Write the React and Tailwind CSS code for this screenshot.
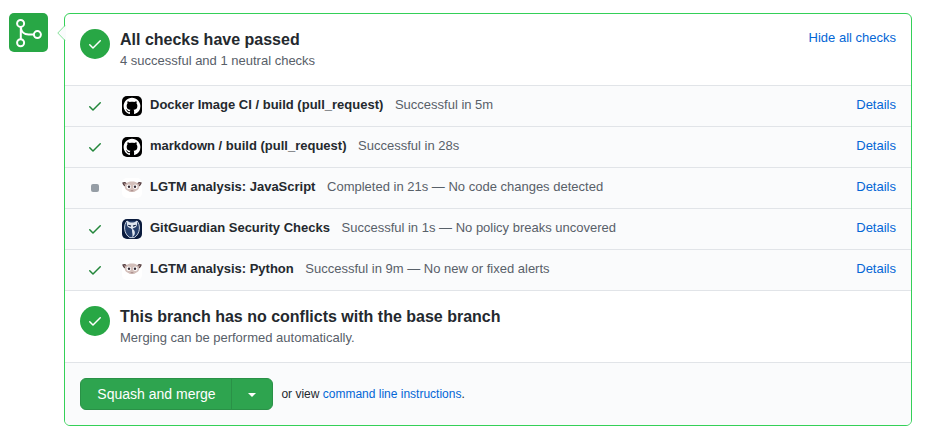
import React from 'react';

function Check({ className }) {
  return (
    <svg className={className} width="16" height="16" viewBox="0 0 16 16" fill="currentColor">
      <path d="M13.78 4.22a.75.75 0 010 1.06l-7.25 7.25a.75.75 0 01-1.06 0L2.22 9.28a.75.75 0 011.06-1.06L6 10.94l6.72-6.72a.75.75 0 011.06 0z" />
    </svg>
  );
}

function MergeIcon() {
  return (
    <svg width="39" height="39" viewBox="0 0 39 39" fill="none" stroke="#fff" strokeWidth="2">
      <circle cx="11.6" cy="10.4" r="3.5" />
      <circle cx="11.6" cy="29.8" r="3.5" />
      <circle cx="28.4" cy="21.6" r="3.5" />
      <path d="M11.8 13.9V26.3M11.8 13.9C12 18.5 15.2 21.6 19.5 21.6H24.9" />
    </svg>
  );
}

function GitHubAvatar() {
  return (
    <svg width="20" height="20" viewBox="0 0 20 20">
      <rect width="20" height="20" rx="5" fill="#000" />
      <g transform="translate(1.6 1.7) scale(1.05)">
        <path
          fill="#fff"
          d="M8 0C3.58 0 0 3.58 0 8c0 3.54 2.29 6.53 5.47 7.59.4.07.55-.17.55-.38 0-.19-.01-.82-.01-1.49-2.01.37-2.53-.49-2.69-.94-.09-.23-.48-.94-.82-1.13-.28-.15-.68-.52-.01-.53.63-.01 1.08.58 1.23.82.72 1.21 1.87.87 2.33.66.07-.52.28-.87.51-1.07-1.78-.2-3.64-.89-3.64-3.95 0-.87.31-1.59.82-2.15-.08-.2-.36-1.02.08-2.12 0 0 .67-.21 2.2.82.64-.18 1.32-.27 2-.27s1.36.09 2 .27c1.53-1.04 2.2-.82 2.2-.82.44 1.1.16 1.92.08 2.12.51.56.82 1.27.82 2.15 0 3.07-1.87 3.75-3.65 3.95.29.25.54.73.54 1.48 0 1.07-.01 1.93-.01 2.2 0 .21.15.46.55.38A8.01 8.01 0 0016 8c0-4.42-3.58-8-8-8z"
        />
      </g>
    </svg>
  );
}

function LgtmAvatar() {
  return (
    <svg width="20" height="20" viewBox="0 0 20 20">
      <rect width="20" height="20" rx="5" fill="#fff" />
      <path d="M.2 4.6C2 3.4 4.2 4 5 5.6L3.2 8.6C1.6 8 .5 6.4 .2 4.6ZM19.8 4.6C18 3.4 15.8 4 15 5.6L16.8 8.6C18.4 8 19.5 6.4 19.8 4.6Z" fill="#5b4547" />
      <path d="M1.7 5.2L4 5.7L3.3 7.4ZM18.3 5.2L16 5.7L16.7 7.4Z" fill="#c9aaa8" />
      <path d="M10 3.5C14 3.5 17.2 5.5 17.2 8.9C17.2 11.4 14.7 12.2 13.2 13.2C11.8 14.4 8.2 14.4 6.8 13.2C5.3 12.2 2.8 11.4 2.8 8.9C2.8 5.5 6 3.5 10 3.5Z" fill="#d3bfba" />
      <circle cx="6.7" cy="8.7" r="2.3" fill="#fff" />
      <circle cx="13.3" cy="8.7" r="2.3" fill="#fff" />
      <circle cx="7" cy="8.7" r="1.2" fill="#332730" />
      <circle cx="13" cy="8.7" r="1.2" fill="#332730" />
      <path d="M8.3 12.2H11.7L10.7 13.2H9.3Z" fill="#a48684" />
    </svg>
  );
}

function GuardianAvatar() {
  return (
    <svg width="20" height="20" viewBox="0 0 20 20">
      <rect width="20" height="20" rx="5" fill="#0a1b3d" />
      <path d="M5 1.8C1.2 6 1.7 15 7.8 18.6H12.2C18.3 15 18.8 6 15 1.8" fill="#263f6b" stroke="#dfe6f0" strokeWidth=".9" />
      <path d="M5 1.8C6.8 3.2 8.5 3.6 10 3.6C11.5 3.6 13.2 3.2 15 1.8C15.5 4.8 15.2 8.8 11.2 9.2L10 10.4L8.8 9.2C4.8 8.8 4.5 4.8 5 1.8Z" fill="#dfe6f0" />
      <path d="M6.2 6.2L9 7.1M13.8 6.2L11 7.1" stroke="#0a1b3d" strokeWidth="1.2" />
      <path d="M10.2 9.8C14 11.5 13.6 16.5 10.2 18.2C11.2 15 9.5 13.5 10.2 9.8Z" fill="#dfe6f0" />
    </svg>
  );
}

const checks = [
  { name: 'Docker Image CI / build (pull_request)', note: 'Successful in 5m', Avatar: GitHubAvatar },
  { name: 'markdown / build (pull_request)', note: 'Successful in 28s', Avatar: GitHubAvatar },
  { name: 'LGTM analysis: JavaScript', note: 'Completed in 21s — No code changes detected', Avatar: LgtmAvatar, neutral: true },
  { name: 'GitGuardian Security Checks', note: 'Successful in 1s — No policy breaks uncovered', Avatar: GuardianAvatar },
  { name: 'LGTM analysis: Python', note: 'Successful in 9m — No new or fixed alerts', Avatar: LgtmAvatar },
];

function CheckRow({ name, note, Avatar, neutral }) {
  return (
    <div className="flex h-[41px] border-b border-[#e1e4e8] bg-[#fafbfc] pr-[15px] pl-[22px]">
      <div className="mt-3 flex h-4 w-4 items-center justify-center text-[#22863a]">
        {neutral ? <span className="h-2 w-2 rounded-[2px] bg-[#959da5]" /> : <Check />}
      </div>
      <div className="mt-2.5 ml-[19px] h-5 w-5">
        <Avatar />
      </div>
      <div className="mt-[9px] ml-2 text-[13px] leading-5 whitespace-nowrap">
        <strong className="font-bold text-[#24292e]">{name}</strong>
        <span className="ml-[11.6px] text-[#586069]">{note}</span>
      </div>
      <a className="mt-[9px] ml-auto text-[13px] leading-5 text-[#0366d6]">Details</a>
    </div>
  );
}

function Status({ title, detail, action }) {
  return (
    <div className="flex h-[72px] border-b border-[#e1e4e8] px-[15px] pt-[15px]">
      <div className="flex h-[30px] w-[30px] items-center justify-center rounded-full bg-[#28a745] text-white">
        <Check />
      </div>
      <div className="ml-2.5">
        <h3 className="text-[16px] leading-[21px] font-bold text-[#24292e]">{title}</h3>
        <p className="mt-px text-[13px] leading-5 text-[#586069]">{detail}</p>
      </div>
      {action && <a className="-mt-px ml-auto text-[13px] leading-5 text-[#0366d6]">{action}</a>}
    </div>
  );
}

export default function App() {
  return (
    <div className="flex h-[434px] w-[930px] bg-white pt-[13px] pl-[9px] font-['Liberation_Sans',Arial,sans-serif]">
      <div className="h-[39px] w-[39px] rounded-[5px] bg-[#28a745]">
        <MergeIcon />
      </div>
      <div className="relative ml-4 h-[413px] w-[848px] rounded-md border border-[#34d058] bg-white">
        <svg className="absolute top-[11px] -left-2" width="9" height="16" viewBox="0 0 9 16">
          <path d="M9 0L1 8L9 16" fill="#fafbfc" />
          <path d="M8 .5L.8 8L8 15.5" fill="none" stroke="#85e29a" />
        </svg>
        <div className="overflow-hidden rounded-[5px]">
          <Status title="All checks have passed" detail="4 successful and 1 neutral checks" action="Hide all checks" />
          {checks.map((check) => (
            <CheckRow key={check.name} {...check} />
          ))}
          <Status title="This branch has no conflicts with the base branch" detail="Merging can be performed automatically." />
          <div className="flex h-[62px] bg-[#fafbfc] pt-[15px] pl-[15px]">
            <div className="flex h-8 w-[193px] rounded-md border border-[#2a9147] bg-[#2ea44f] text-white">
              <button className="w-[151px] border-r border-[#2a9147] pl-px text-[14px] leading-5">Squash and merge</button>
              <button className="flex flex-1 items-center justify-center">
                <span className="mt-px border-x-4 border-t-4 border-x-transparent border-t-white" />
              </button>
            </div>
            <p className="ml-[8.4px] text-[12px] leading-8 text-[#24292e]">
              or view <a className="text-[#0366d6]">command line instructions</a>.
            </p>
          </div>
        </div>
      </div>
    </div>
  );
}
